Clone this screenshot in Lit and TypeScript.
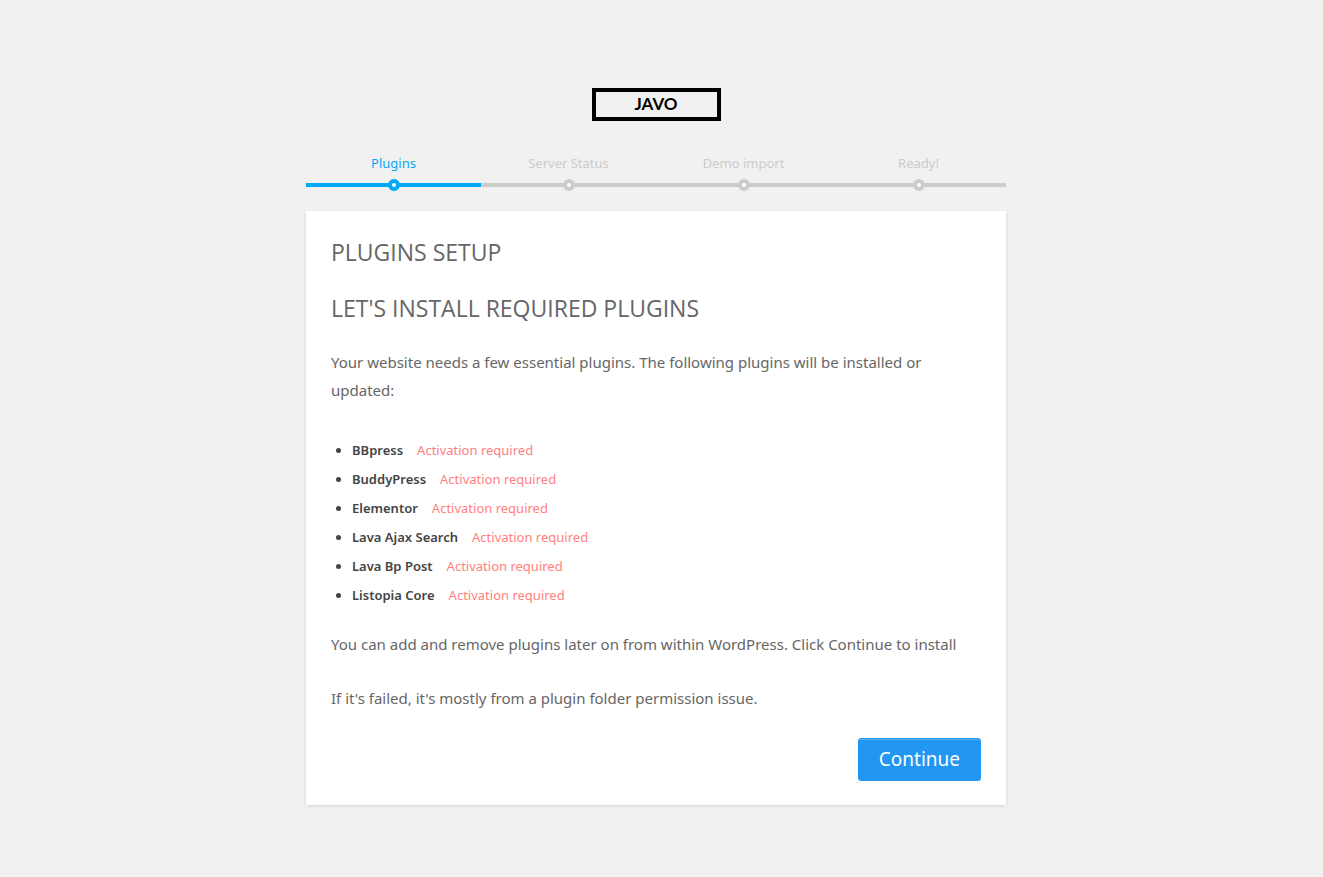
import { LitElement, html, css } from "lit";
import { customElement, state } from "lit/decorators.js";
import { classMap } from "lit/directives/class-map.js";

interface Plugin {
  name: string;
  status: string;
}

@customElement("setup-steps")
class SetupSteps extends LitElement {
  static properties = { steps: { type: Array }, current: { type: Number } };
  declare steps: string[];
  declare current: number;

  static styles = css`
    :host {
      display: block;
    }
    .steps {
      display: grid;
      grid-auto-flow: column;
      grid-auto-columns: 1fr;
      list-style: none;
      margin: 0;
      padding: 0;
    }
    .step {
      position: relative;
      padding-bottom: 10px;
      border-bottom: 4px solid #ccc;
      color: #ccc;
      font-size: 13px;
      line-height: 20px;
      text-align: center;
    }
    .step::before {
      content: "";
      position: absolute;
      bottom: -8px;
      left: 50%;
      margin-left: -6px;
      box-sizing: border-box;
      width: 12px;
      height: 12px;
      border: 4px solid #ccc;
      border-radius: 50%;
      background: #fff;
    }
    .step.active {
      color: #03a9f4;
      border-color: #03a9f4;
    }
    .step.active::before {
      border-color: #03a9f4;
    }
  `;

  render() {
    return html`<ol class="steps">
      ${this.steps.map(
        (step, i) => html`<li class=${classMap({ step: true, active: i <= this.current })}>${step}</li>`
      )}
    </ol>`;
  }
}

@customElement("app-root")
class AppRoot extends LitElement {
  @state() private steps = ["Plugins", "Server Status", "Demo import", "Ready!"];
  @state() private plugins: Plugin[] = [
    "BBpress",
    "BuddyPress",
    "Elementor",
    "Lava Ajax Search",
    "Lava Bp Post",
    "Listopia Core",
  ].map((name) => ({ name, status: "Activation required" }));

  static styles = css`
    :host {
      display: block;
      box-sizing: border-box;
      min-height: 100vh;
      padding: 88px 11px 72px 0;
      background: #f1f1f1;
      color: #666;
      font-family: "Noto Sans", "Open Sans", sans-serif;
    }
    .wizard {
      max-width: 700px;
      margin: 0 auto;
    }
    .brand {
      display: flex;
      justify-content: center;
      margin-bottom: 32px;
    }
    .logo {
      box-sizing: border-box;
      width: 129px;
      padding-bottom: 1px;
      border: 4px solid #000;
      color: #000;
      font-family: Lato, sans-serif;
      font-size: 17px;
      font-weight: 700;
      line-height: 24px;
      text-align: center;
      text-decoration: none;
    }
    .card {
      margin-top: 24px;
      padding: 23px 25px 24px;
      background: #fff;
      box-shadow: 0 1px 3px rgba(0, 0, 0, 0.13);
    }
    .title {
      margin: 0 0 20px;
      font-family: "Open Sans", "Noto Sans", sans-serif;
      font-size: 23px;
      font-weight: 400;
      line-height: 36px;
    }
    .text {
      margin: 0 0 26px;
      font-size: 15px;
      line-height: 28px;
    }
    .title + .text {
      margin-top: 22px;
    }
    .plugins {
      margin: 32px 0 20px;
      padding: 0 0 0 21px;
      color: #444;
      font-size: 13px;
      line-height: 29px;
    }
    .name {
      margin-right: 14px;
      font-weight: 600;
    }
    .status {
      color: #ff8080;
    }
    .actions {
      display: flex;
      justify-content: flex-end;
    }
    .continue {
      padding: 0 20px;
      border: 1px solid #2196f3;
      border-radius: 3px;
      background: #2196f3;
      box-shadow: inset 0 1px 0 rgba(255, 255, 255, 0.25);
      color: #fff;
      font: inherit;
      font-size: 19px;
      line-height: 41px;
      cursor: pointer;
    }
  `;

  render() {
    return html`
      <main class="wizard">
        <div class="brand"><a class="logo" href="#">JAVO</a></div>
        <setup-steps .steps=${this.steps} .current=${0}></setup-steps>
        <section class="card">
          <h1 class="title">PLUGINS SETUP</h1>
          <h2 class="title">LET'S INSTALL REQUIRED PLUGINS</h2>
          <p class="text">
            Your website needs a few essential plugins. The following plugins will be installed or updated:
          </p>
          <ul class="plugins">
            ${this.plugins.map(
              (p) => html`<li><span class="name">${p.name}</span><span class="status">${p.status}</span></li>`
            )}
          </ul>
          <p class="text">
            You can add and remove plugins later on from within WordPress. Click Continue to install
          </p>
          <p class="text">If it's failed, it's mostly from a plugin folder permission issue.</p>
          <div class="actions">
            <button class="continue" type="button">Continue</button>
          </div>
        </section>
      </main>
    `;
  }
}
